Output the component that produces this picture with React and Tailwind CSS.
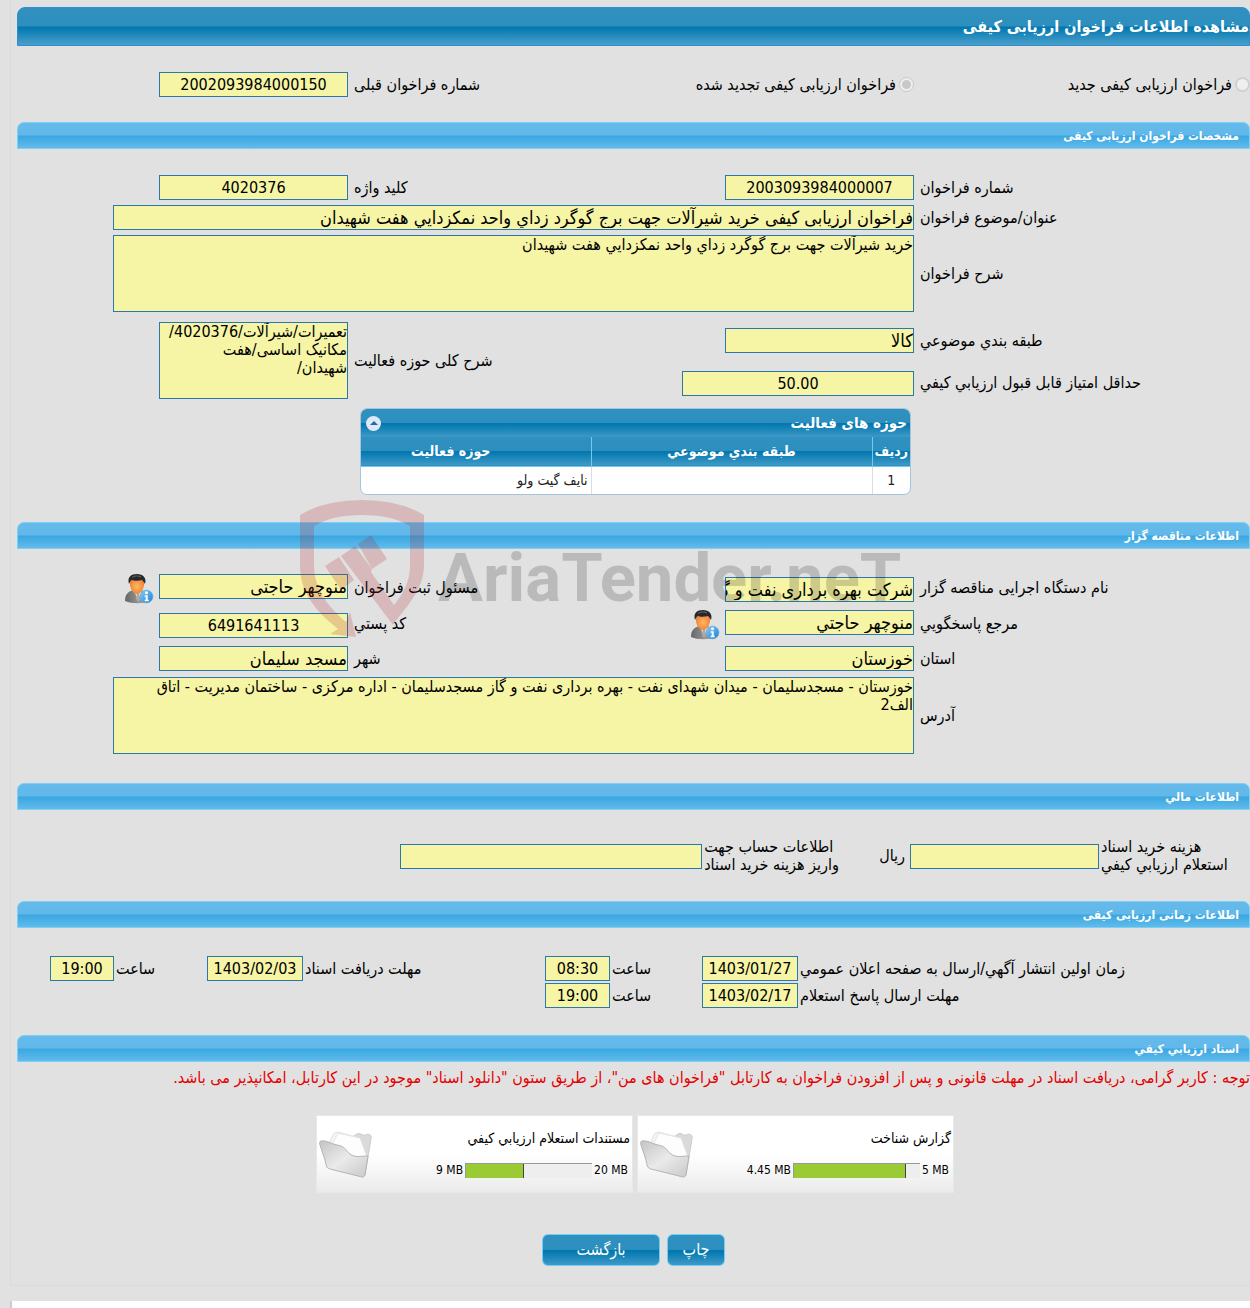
import React from "react";

const box = "block border border-[#2b78ad] bg-[#f6f4a5] p-0 text-black outline-none rounded-none";
const labelText = "text-[16px] leading-[18px] text-black";

function Label({ htmlFor, className = "", children }) {
  return (
    <label htmlFor={htmlFor} className={`${labelText} text-left self-center ${className}`}>
      {children}
    </label>
  );
}

function Field({ id, value = "", center = false, className = "w-[189px]" }) {
  return (
    <input
      id={id}
      type="text"
      readOnly
      defaultValue={value}
      className={`${box} h-[25px] leading-[22px] ${center ? "text-center text-[16px]" : "text-right text-[18px]"} ${className}`}
    />
  );
}

function Area({ id, value, className }) {
  return (
    <textarea
      id={id}
      readOnly
      defaultValue={value}
      className={`${box} h-[77px] resize-none overflow-hidden text-[16px] leading-[18px] ${className}`}
    />
  );
}

function SectionBar({ children }) {
  return (
    <h2 className="h-[27px] rounded-t-[7px] border border-[#7dd0f5] bg-[linear-gradient(#64baea_0%,#62b9e9_48%,#39a7e2_52%,#62bbea_100%)] pr-[10px] text-[12px] leading-[27px] font-bold text-white">
      {children}
    </h2>
  );
}

const grid = "grid grid-cols-[330fr_232fr_322fr_331fr] gap-x-[6px]";

function PersonButton({ label }) {
  return (
    <button type="button" aria-label={label} className="h-[30px] w-[29px] shrink-0">
      <svg viewBox="0 0 29 30" className="h-[30px] w-[29px]">
        <defs>
          <linearGradient id="suit" x1="0" y1="0" x2="1" y2="0">
            <stop offset="0" stopColor="#666" />
            <stop offset="0.6" stopColor="#999" />
            <stop offset="1" stopColor="#777" />
          </linearGradient>
          <radialGradient id="skin">
            <stop offset="0" stopColor="#ffb866" />
            <stop offset="1" stopColor="#ee8636" />
          </radialGradient>
          <linearGradient id="info" x1="0" y1="0" x2="1" y2="1">
            <stop offset="0" stopColor="#8ccdf5" />
            <stop offset="1" stopColor="#1c7fd4" />
          </linearGradient>
        </defs>
        <path d="M0 27 C0 20 3 18 8 16 L16 16 C21 18 24 20 25 27 C18 30 7 30 0 27Z" fill="url(#suit)" />
        <path d="M9 16 L13 27 L17 16Z" fill="#f4f4f4" />
        <path d="M12 18h2l1 7-2 3-2-3z" fill="#aaa" />
        <path d="M5 7 C4 14 8 20 12 20 C16 20 20 14 19 7 C15 4 9 4 5 7Z" fill="url(#skin)" />
        <path d="M4 10 C2 3 6 0 12 0 C18 0 22 4 20 10 C19 8 18 7 17 6 C13 7 9 7 7 6 C5 7 5 8 4 10Z" fill="#26282b" />
        <path d="M7 3.500 C9 1.500 14 1.500 16 3" stroke="#666" strokeWidth="1" fill="none" />
        <circle cx="21.500" cy="22.500" r="6.500" fill="url(#info)" stroke="#58aee6" strokeWidth="0.500" />
        <circle cx="21.500" cy="18.800" r="1.500" fill="#fff" />
        <path d="M19.700 21.200h3v4.500h1v1.500h-4v-1.500h1v-3h-1z" fill="#fff" />
      </svg>
    </button>
  );
}

function Folder() {
  return (
    <svg viewBox="0 0 54 50" className="h-[50px] w-[54px] shrink-0">
      <defs>
        <linearGradient id="folderFront" x1="0" y1="0" x2="1" y2="1">
          <stop offset="0" stopColor="#c4c4c4" />
          <stop offset="0.5" stopColor="#eaeaea" />
          <stop offset="1" stopColor="#c8c8c8" />
        </linearGradient>
      </defs>
      <path d="M32 9 L38 5 C41 3 43 7 46 6 C50 4 53 6 52 10 L46 46 L38 46Z" fill="#dadada" stroke="#c4c4c4" strokeWidth="0.800" />
      <path d="M11 12 L15 4 L19 3 L37 8 L42 32 L16 24Z" fill="#f4f4f4" stroke="#dcdcdc" strokeWidth="0.800" />
      <path d="M14 14 L19 4 L41 9 L48 28 L40 34Z" fill="#fdfdfd" stroke="#e0e0e0" strokeWidth="0.800" />
      <path
        d="M2 12 C8 11 12 15 18 16 C26 17 27 22 31 25 C36 29 42 27 49 27 L46 46 C45 49 42 48 39 47 L11 40 C7 39 7 36 6 31 L1 16 C0 14 1 12 2 12Z"
        fill="url(#folderFront)"
        stroke="#b4b4b4"
        strokeWidth="1"
      />
    </svg>
  );
}

function FileCard({ title, used, total, percent }) {
  return (
    <article className="flex h-[78px] w-[317px] items-center justify-between border border-[#e8e8e8] bg-gradient-to-b from-white from-50% to-[#ebebeb] px-[2px]">
      <div className="flex h-full flex-col justify-between pt-[14px] pb-[14px]">
        <h3 className="text-[14px] leading-[16px]">{title}</h3>
        <div dir="ltr" className="flex items-center justify-end gap-[2px] pr-[2px] text-[12px] leading-[16px]">
          <span>{used}</span>
          <div className="h-[15px] w-[127px] border-t border-l border-[#999] bg-[#eee]">
            <div className="h-full border-r border-[#444] bg-[#9acb34]" style={{ width: `${percent}%` }} />
          </div>
          <span>{total}</span>
        </div>
      </div>
      <Folder />
    </article>
  );
}

function Watermark() {
  return (
    <div dir="ltr" aria-hidden="true" className="pointer-events-none absolute top-[-22px] left-[283px] flex">
      <svg viewBox="0 0 124 140" className="h-[140px] w-[124px] opacity-20">
        <g fill="#b01e28">
          <path d="M0 15 Q25 0 62 0 Q99 0 124 15 V65 C124 90 105 108 93 125 L41 56 L55 46 L72 69 L71 72 L94 105 C103 94 110 82 110 65 V26 Q92 15 62 15 Q32 15 14 26 V65 C14 88 27 106 46 122 L50 112 L56 137 L30 134 L38 129 C12 108 0 90 0 65Z" />
          <path d="M25 66 L39 57 L54 80 L41 90Z" />
          <path d="M58 44 L71 35 L87 59 L72 69Z" />
        </g>
      </svg>
      <span className="ml-[14px] pt-[28px] font-['Roboto',sans-serif] text-[67px] leading-[100px] font-bold text-black opacity-[0.17]">
        AriaTender.neT
      </span>
    </div>
  );
}

const glossy = "bg-[linear-gradient(#3091c0_0%,#2d8fbe_48%,#0077af_52%,#3f99c7_100%)]";

export default function App() {
  return (
    <div dir="rtl" className="overflow-hidden bg-white font-['DejaVu_Sans_Condensed','DejaVu_Sans',sans-serif] text-black">
      <div className="bg-[#e1e1e1] pb-[15px] pl-[10px]">
        <main className="border-b border-l border-[#dadada] pt-[7px] pb-[19px] pl-[6px]">
          <h1 className="h-[39px] rounded-t-[8px] border border-[#2e90cc] bg-[linear-gradient(#3091c0_0%,#2d8fbe_48%,#0077af_52%,#4a9fcb_100%)] text-[16px] leading-[37px] font-bold text-white">
            مشاهده اطلاعات فراخوان ارزیابی کیفی
          </h1>

          <div className={`${grid} items-center pt-[26px] pb-[25px]`}>
            <div className="flex items-center gap-[3px]">
              <input id="kind-new" type="radio" name="kind" disabled className="m-0 size-[15px] shrink-0 appearance-none rounded-full border-2 border-[#d0d0d0] bg-[#efefef]" />
              <label htmlFor="kind-new" className={labelText}>فراخوان ارزیابی کیفی جدید</label>
            </div>
            <div className="flex items-center gap-[3px]">
              <input
                id="kind-renew"
                type="radio"
                name="kind"
                disabled
                defaultChecked
                className="m-0 size-[15px] shrink-0 appearance-none rounded-full border border-[#c8c8c8] bg-[radial-gradient(circle,#c8c8c8_4px,#efefef_5px)]"
              />
              <label htmlFor="kind-renew" className={`${labelText} whitespace-nowrap`}>فراخوان ارزیابی کیفی تجدید شده</label>
            </div>
            <Label htmlFor="prev">شماره فراخوان قبلی</Label>
            <Field id="prev" center value="2002093984000150" />
          </div>

          <SectionBar>مشخصات فراخوان ارزیابی کیفی</SectionBar>
          <section className="pt-[26px] pb-[27px]">
            <div className="flex flex-col gap-[5px]">
              <div className={grid}>
                <Label htmlFor="num">شماره فراخوان</Label>
                <Field id="num" center value="2003093984000007" />
                <Label htmlFor="key">کلید واژه</Label>
                <Field id="key" center value="4020376" />
              </div>
              <div className={grid}>
                <Label htmlFor="subject">عنوان/موضوع فراخوان</Label>
                <Field id="subject" className="col-span-3 w-[801px]" value="فراخوان ارزیابی کیفی خرید شیرآلات جهت برج گوگرد زداي واحد نمكزدايي هفت شهيدان" />
              </div>
              <div className={grid}>
                <Label htmlFor="desc">شرح فراخوان</Label>
                <Area id="desc" className="col-span-3 w-[801px]" value="خرید شیرآلات جهت برج گوگرد زداي واحد نمكزدايي هفت شهيدان" />
              </div>
            </div>
            <div className={`${grid} grid-rows-[37px_32px] items-center gap-y-[8px] pt-[10px] pb-[9px]`}>
              <Label htmlFor="cat">طبقه بندي موضوعي</Label>
              <Field id="cat" value="کالا" />
              <Label htmlFor="scope" className="row-span-2">شرح کلی حوزه فعالیت</Label>
              <Area id="scope" className="row-span-2 w-[189px]" value={"تعمیرات/شیرآلات/4020376/\nمکانیک اساسی/هفت\nشهیدان/"} />
              <Label htmlFor="score">حداقل امتياز قابل قبول ارزيابي كيفي</Label>
              <Field id="score" center className="w-[232px]" value="50.00" />
            </div>

            <div className="mr-[339px] w-[551px] overflow-hidden rounded-[7px] border border-[#a3c6dd] bg-white">
              <div className={`flex h-[28px] items-center justify-between pr-[3px] pl-[5px] ${glossy}`}>
                <h3 className="text-[15px] font-bold text-white">حوزه های فعالیت</h3>
                <button type="button" aria-label="بستن جدول" className="flex size-[15px] items-center justify-center rounded-full bg-[#dfe9f6]">
                  <svg viewBox="0 0 8 4" className="h-[4px] w-[8px]"><path d="M0 4L4 0L8 4Z" fill="#1c6ea8" /></svg>
                </button>
              </div>
              <table className="w-full table-fixed border-collapse">
                <thead>
                  <tr className={`h-[29px] border-b border-[#6fcbf2] text-[14px] text-white ${glossy}`}>
                    <th className="w-[38px] border-l border-[#6fcbf2] p-0 font-bold">ردیف</th>
                    <th className="w-[281px] border-l border-[#6fcbf2] p-0 font-bold">طبقه بندي موضوعي</th>
                    <th className="p-0 pr-[50px] font-bold">حوزه فعالیت</th>
                  </tr>
                </thead>
                <tbody>
                  <tr className="h-[28px] text-[14px] text-[#222]">
                    <td className="border-l border-[#ddd] p-0 text-center">1</td>
                    <td className="border-l border-[#ddd] p-0" />
                    <td className="p-0 pr-[3px]">نايف گيت ولو</td>
                  </tr>
                </tbody>
              </table>
            </div>
          </section>

          <div className="relative">
            <SectionBar>اطلاعات مناقصه گزار</SectionBar>
            <section className="pt-[25px] pb-[29px]">
              <div className={`${grid} grid-rows-[28px]`}>
                <Label htmlFor="org">نام دستگاه اجرایی مناقصه گزار</Label>
                <Field id="org" className="w-[189px] self-end" value="شرکت بهره برداری نفت و گاز مسجدسلیمان" />
                <Label htmlFor="registrar">مسئول ثبت فراخوان</Label>
                <div className="flex gap-[5px]">
                  <Field id="registrar" value="منوچهر حاجتی" />
                  <PersonButton label="مشخصات مسئول ثبت" />
                </div>
              </div>
              <div className={`${grid} mt-[8px] grid-rows-[28px]`}>
                <Label htmlFor="ref">مرجع پاسخگويي</Label>
                <div className="flex gap-[5px]">
                  <Field id="ref" value="منوچهر حاجتي" />
                  <PersonButton label="مشخصات مرجع پاسخگويي" />
                </div>
                <Label htmlFor="zip">كد پستي</Label>
                <Field id="zip" center className="w-[189px] self-end" value="6491641113" />
              </div>
              <div className={`${grid} mt-[8px]`}>
                <Label htmlFor="state">استان</Label>
                <Field id="state" value="خوزستان" />
                <Label htmlFor="city">شهر</Label>
                <Field id="city" value="مسجد سليمان" />
              </div>
              <div className={`${grid} mt-[6px]`}>
                <Label htmlFor="addr">آدرس</Label>
                <Area id="addr" className="col-span-3 w-[801px]" value={"خوزستان - مسجدسلیمان - میدان شهدای نفت - بهره برداری نفت و گاز مسجدسلیمان - اداره مرکزی - ساختمان مدیریت - اتاق\nالف2"} />
              </div>
            </section>
            <Watermark />
          </div>

          <SectionBar>اطلاعات مالي</SectionBar>
          <section className="flex items-center pt-[28px] pr-[12px] pb-[27px]">
            <Label htmlFor="cost" className="w-[137px] whitespace-nowrap">
              هزینه خرید اسناد<br />استعلام ارزيابي كيفي
            </Label>
            <Field id="cost" className="mr-[2px] w-[189px]" />
            <span className={`${labelText} mr-[5px]`}>ریال</span>
            <Label htmlFor="account" className="mr-[37px] w-[138px] whitespace-nowrap">
              اطلاعات حساب جهت<br />واریز هزینه خرید اسناد
            </Label>
            <Field id="account" className="mr-[2px] w-[302px]" />
          </section>

          <SectionBar>اطلاعات زمانی ارزیابی کیفی</SectionBar>
          <section className="grid grid-cols-[450fr_96px_88fr_65px_238fr_96px_89fr_64px] gap-x-[2px] gap-y-[2px] pt-[28px] pb-[27px] pl-[33px]">
            <Label htmlFor="pub">زمان اولین انتشار آگهي/ارسال به صفحه اعلان عمومي</Label>
            <Field id="pub" center className="w-full" value="1403/01/27" />
            <Label htmlFor="pub-h">ساعت</Label>
            <Field id="pub-h" center className="w-full" value="08:30" />
            <Label htmlFor="get">مهلت دریافت اسناد</Label>
            <Field id="get" center className="w-full" value="1403/02/03" />
            <Label htmlFor="get-h">ساعت</Label>
            <Field id="get-h" center className="w-full" value="19:00" />
            <Label htmlFor="send">مهلت ارسال پاسخ استعلام</Label>
            <Field id="send" center className="w-full" value="1403/02/17" />
            <Label htmlFor="send-h">ساعت</Label>
            <Field id="send-h" center className="w-full" value="19:00" />
          </section>

          <SectionBar>اسناد ارزيابي كيفي</SectionBar>
          <p className="pt-[7px] text-[16px] leading-[18px] whitespace-nowrap text-[#e60000]">
            توجه : کاربر گرامی، دریافت اسناد در مهلت قانونی و پس از افزودن فراخوان به کارتابل "فراخوان های من"، از طریق ستون "دانلود اسناد" موجود در این کارتابل، امکانپذیر می باشد.
          </p>
          <section className="flex justify-center gap-[4px] pt-[28px] pl-[3px]">
            <FileCard title="گزارش شناخت" used="4.45 MB" total="5 MB" percent={89} />
            <FileCard title="مستندات استعلام ارزيابي كيفي" used="9 MB" total="20 MB" percent={46} />
          </section>
          <div className="flex justify-center gap-[7px] pt-[41px]">
            <button type="button" className={`h-[32px] w-[58px] rounded-[6px] border border-[#6fd0f3] text-[16px] text-white ${glossy}`}>چاپ</button>
            <button type="button" className={`h-[32px] w-[118px] rounded-[6px] border border-[#6fd0f3] text-[16px] text-white ${glossy}`}>بازگشت</button>
          </div>
        </main>
      </div>
      <div className="bg-[#e1e1e1] pl-[10px]">
        <div className="h-[7px] border-l-2 border-[#ccc] bg-white" />
      </div>
    </div>
  );
}
